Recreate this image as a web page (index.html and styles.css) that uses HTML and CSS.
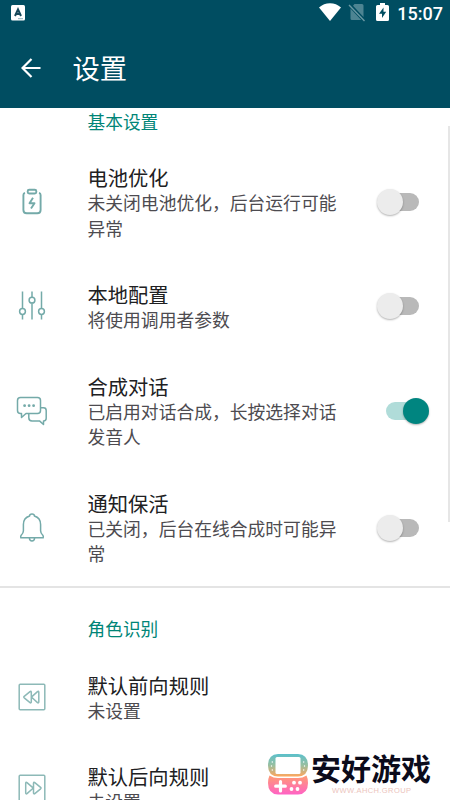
FILE: index.html
```html
<!DOCTYPE html>
<html lang="zh-CN">
<head>
<meta charset="utf-8">
<title>设置</title>
<link rel="stylesheet" href="styles.css">
</head>
<body>
<div class="screen">
  <header class="header">
    <div class="status">
      <svg class="app-badge" width="14" height="16" viewBox="0 0 14 16"><rect width="14" height="15.500" rx="1.500" fill="#fff"/><path d="M4 11 7 4.500 10 11M5 9h4" fill="none" stroke="#17485a" stroke-width="2"/><path d="M7 13.700h5" stroke="#8fb0ba"/></svg>
      <div class="status-right">
        <svg width="22" height="18" viewBox="0 0 22 18"><path d="M0 4.500C6-1.200 16-1.200 22 4.500L11 18Z" fill="#fff"/></svg>
        <svg class="sim" width="18" height="19" viewBox="0 0 18 19"><path d="M6.500 1H14q1.500 0 1.500 1.500V14L5 2.700ZM2.500 5.500 13.200 17H4q-1.500 0-1.500-1.500Z" fill="#4d8492"/><path d="m1 2 15.500 16" stroke="#6b99a4" stroke-width="1.400"/></svg>
        <svg class="charge" width="13" height="18" viewBox="0 0 13 18"><path d="M4 0h5v2h2.500Q13 2 13 3.500v13q0 1.500-1.500 1.500h-10Q0 18 0 16.500v-13Q0 2 1.500 2H4Z" fill="#fff"/><path d="M7.500 4.500 3 10.700h3V15l4.200-6.200H7.500Z" fill="#004d61"/></svg>
        <span class="clock">15:07</span>
      </div>
    </div>
    <div class="toolbar">
      <svg width="20" height="20" viewBox="0 0 20 20"><path d="M19.500 10H1.500M10.500 1 1.500 10l9 9" fill="none" stroke="#fff" stroke-width="2.200"/></svg>
      <h1>设置</h1>
    </div>
  </header>

  <main class="list">
    <h2 class="category first">基本设置</h2>

    <section class="row tall">
      <svg class="icon" viewBox="0 0 32 32"><g class="heavy"><rect x="11.700" y="3.700" width="8.600" height="3.800" rx="1.500"/><path d="M9 6.800q-1.600.4-1.600 2.200v15q0 3.300 3.300 3.300h10.600q3.300 0 3.300-3.300V9q0-1.800-1.600-2.200"/><path d="m17 11.700-3.500 5.500h5L15 22.500"/></g></svg>
      <div class="text"><h3>电池优化</h3><p>未关闭电池优化，后台运行可能异常</p></div>
      <span class="switch"></span>
    </section>

    <section class="row">
      <svg class="icon" viewBox="0 0 32 32"><path d="M6.500 1.500v17m0 6v5M16 1.500v5.700m0 6v16.300M25.500 1.500v17m0 6v5"/><circle cx="6.500" cy="21.500" r="2.900"/><circle cx="16" cy="10.200" r="2.900"/><circle cx="25.500" cy="21.500" r="2.900"/></svg>
      <div class="text"><h3>本地配置</h3><p>将使用调用者参数</p></div>
      <span class="switch"></span>
    </section>

    <section class="row tall">
      <svg class="icon" viewBox="0 0 32 32"><path d="M4.500 2.500h17q3 0 3 3v10q0 3-3 3H10L5.500 22.500v-4h-1q-3 0-3-3v-10q0-3 3-3ZM24.500 12.700H27.500q2.700 0 2.700 2.700v7.800q0 2.700-2.700 2.700v3.600l-4-3.600H16q-3.200 0-3.200-3.200v-4.200"/><g class="dots"><circle cx="8.600" cy="10.700" r="1.400"/><circle cx="13.100" cy="10.700" r="1.400"/><circle cx="17.600" cy="10.700" r="1.400"/></g></svg>
      <div class="text"><h3>合成对话</h3><p>已启用对话合成，长按选择对话发音人</p></div>
      <span class="switch on"></span>
    </section>

    <section class="row tall">
      <svg class="icon" viewBox="0 0 32 32"><path d="M13.600 4Q13.600 2 16 2t2.400 2c4 1.200 6.200 4.700 6.200 8.500v6.200q0 2.500 2.200 4.500.8 1.300.4 2.600H4.800q-.4-1.300.4-2.600 2.200-2 2.200-4.500v-6.200c0-3.800 2.200-7.300 6.200-8.500ZM13.400 26.200c.3 3.600 4.900 3.600 5.200 0"/></svg>
      <div class="text"><h3>通知保活</h3><p>已关闭，后台在线合成时可能异常</p></div>
      <span class="switch"></span>
    </section>

    <h2 class="category divided">角色识别</h2>

    <section class="row">
      <svg class="icon faint" viewBox="0 0 32 32"><rect x="3.200" y="3.200" width="25.600" height="25.600" rx="1"/><path d="M14 10.600q1-.8 1.300.5v10q-.3 1.300-1.300.5L8.200 16.800q-.8-.7 0-1.400ZM21.500 10.600q1-.8 1.300.5v10q-.3 1.300-1.300.5l-5.300-4.800q-.8-.7 0-1.400Z"/></svg>
      <div class="text"><h3>默认前向规则</h3><p>未设置</p></div>
    </section>

    <section class="row">
      <svg class="icon faint" viewBox="0 0 32 32"><rect x="3.200" y="3.200" width="25.600" height="25.600" rx="1"/><path d="M11 10.600q-1-.8-1.300.5v10q.3 1.300 1.300.5l5.500-4.800q.8-.7 0-1.400ZM18.800 10.600q-1-.8-1.300.5v10q.3 1.300 1.300.5l5.800-4.800q.8-.7 0-1.400Z"/></svg>
      <div class="text"><h3>默认后向规则</h3><p>未设置</p></div>
    </section>
  </main>

  <span class="scrollbar"></span>

  <div class="watermark">
    <svg width="40" height="41" viewBox="0 0 40 41">
      <defs><linearGradient id="top" x2="0" y2="1"><stop stop-color="#5bc0cb"/><stop offset=".5" stop-color="#98bfa0"/><stop offset="1" stop-color="#ffa65c"/></linearGradient><linearGradient id="bottom" x2="0" y2="1"><stop stop-color="#ff9c72"/><stop offset="1" stop-color="#ff62c5"/></linearGradient></defs>
      <path d="M10 0h20q10 .5 10 11.500Q40 22 30 22.500H10Q0 22 0 11.500Q0 .5 10 0Z" fill="url(#top)"/>
      <rect x="7.500" y="3" width="25" height="17" rx="1.500" fill="#fff"/>
      <path d="M1.500 21.500q4 2.500 8.500 2.500h20q4.500 0 8.500-2.500Q40 24.500 40 29q0 11-10 11.500H10Q0 40 0 29q0-4.500 1.500-7.500Z" fill="url(#bottom)"/>
      <path d="M12.500 27.500v9.500M7.700 32.200h9.600" stroke="#fff" stroke-width="3.200" stroke-linecap="round"/>
      <g fill="#fff"><circle cx="26" cy="28.700" r="1.900"/><circle cx="32" cy="28.700" r="1.900"/><circle cx="23.500" cy="35" r="1.900"/><circle cx="29.500" cy="35" r="1.900"/><circle cx="4.300" cy="8" r=".7"/><circle cx="3.500" cy="12" r=".7"/><circle cx="4.300" cy="16" r=".7"/><circle cx="35.700" cy="8" r=".7"/><circle cx="36.500" cy="12" r=".7"/><circle cx="35.700" cy="16" r=".7"/></g>
    </svg>
    <div class="brand"><strong>安好游戏</strong><small>WWW.AHCH.GROUP</small></div>
  </div>
</div>
</body>
</html>
```

FILE: styles.css
```css
* { box-sizing: border-box; }
body {
  margin: 0;
  background: #fff;
  font-family: "Noto Sans CJK SC", sans-serif;
}
h1, h2, h3, p { margin: 0; font-weight: 400; }
svg { display: block; flex: none; }

.screen {
  position: relative;
  width: 450px;
  height: 800px;
  overflow: hidden;
}

.header {
  height: 108px;
  background: #004d61;
  color: #fff;
}
.status {
  height: 27px;
  display: flex;
  justify-content: space-between;
  align-items: flex-start;
  padding: 3px 7px 0 11px;
}
.app-badge { margin-top: 2px; }
.status-right { display: flex; align-items: flex-start; }
.sim { margin-left: 7px; }
.charge { margin-left: 10px; }
.clock {
  margin-left: 8px;
  font: 500 18px/21px Roboto, sans-serif;
}
.toolbar {
  height: 81px;
  display: flex;
  align-items: center;
  gap: 31.500px;
  padding-left: 21px;
}
.toolbar h1 { margin-top: -1px; font-size: 27.300px; line-height: 40px; }

.list { color: #202022; }
.category {
  padding-left: 87.500px;
  font-size: 17.700px;
  line-height: 26px;
  color: #008577;
}
.first { height: 36px; }
.divided {
  height: 66px;
  margin-top: -1px;
  padding-top: 27px;
  border-top: 2px solid #e4e4e4;
}

.row {
  display: flex;
  align-items: center;
  height: 91.500px;
  padding: 0 21px 0 16px;
}
.tall { height: 117px; }
.icon {
  width: 32px;
  height: 32px;
  margin-top: -1px;
  fill: none;
  stroke: #74aaa9;
  stroke-width: 1.500;
  stroke-linejoin: round;
}
.heavy { stroke-width: 1.900; }
.faint { stroke: #8db9b7; }
.dots { fill: #74aaa9; stroke: none; }
.text { width: 255px; margin-left: 39.500px; }
.text h3 { font-size: 20.300px; line-height: 26px; }
.text p { font-size: 17.800px; line-height: 25.300px; color: #4d4b50; }

.switch {
  display: flex;
  align-items: center;
  width: 34px;
  height: 18px;
  margin: -1px 10px 0 auto;
  border-radius: 9px;
  background: #b9b9b9;
}
.switch::before {
  content: "";
  flex: none;
  width: 26px;
  height: 26px;
  margin-left: -8px;
  border-radius: 50%;
  background: #ececec;
  box-shadow: 0 1px 2px rgba(0, 0, 0, .3);
}
.switch.on { margin-right: 9px; background: #b0dcd9; }
.switch.on::before { margin-left: 17px; background: #008580; }

.scrollbar {
  position: absolute;
  top: 126px;
  right: 0;
  width: 2px;
  height: 396px;
  background: #e6e6e6;
}

.watermark {
  position: absolute;
  left: 268px;
  top: 754px;
  display: flex;
  gap: 3px;
}
.brand { display: flex; flex-direction: column; }
.brand strong {
  margin-top: -2px;
  font-size: 30px;
  line-height: 30px;
  font-weight: 700;
  color: #0b0b1b;
}
.brand small {
  margin: 4px 0 0 21px;
  font: 7.500px/9px "Liberation Sans", sans-serif;
  letter-spacing: .4px;
  color: #ecc4bd;
}
```
